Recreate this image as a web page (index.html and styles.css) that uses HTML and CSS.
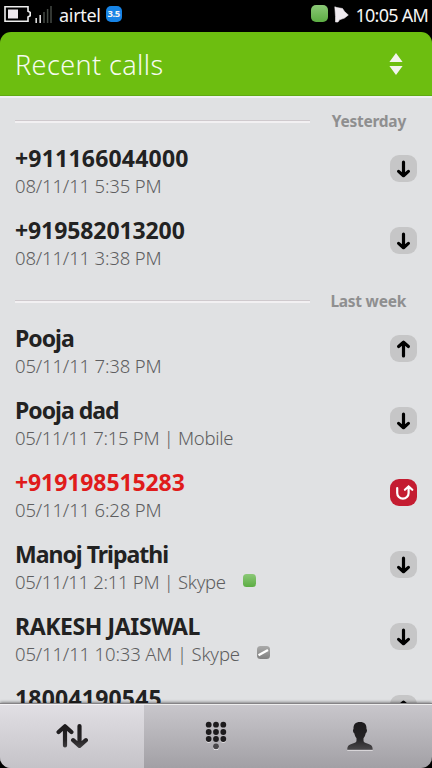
FILE: index.html
```html
<!DOCTYPE html>
<html lang="en">
<head>
<meta charset="utf-8">
<title>Recent calls</title>
<link rel="stylesheet" href="styles.css">
</head>
<body>
<svg class="defs" width="0" height="0" aria-hidden="true">
  <defs>
    <linearGradient id="online" x1="0" y1="0" x2="0" y2="1"><stop offset="0" stop-color="#8bc877"/><stop offset="1" stop-color="#5cad43"/></linearGradient>
    <linearGradient id="offline" x1="0" y1="0" x2="0" y2="1"><stop offset="0" stop-color="#aaa"/><stop offset="1" stop-color="#818181"/></linearGradient>
    <linearGradient id="ink" gradientUnits="userSpaceOnUse" x1="0" y1="0" x2="0" y2="28"><stop offset="0" stop-color="#1c1a1c"/><stop offset=".6" stop-color="#252325"/><stop offset="1" stop-color="#4b494b"/></linearGradient>
    <symbol id="down" viewBox="0 0 27 27"><path d="M13.500 7.200V20M8.600 16.400l4.900 4.300 4.900-4.300" fill="none" stroke="#000" stroke-width="3.200" stroke-linecap="round" stroke-linejoin="round"/></symbol>
    <symbol id="up" viewBox="0 0 27 27"><path d="M13.500 21V8M8.600 11.500l4.900-4.300 4.900 4.300" fill="none" stroke="#000" stroke-width="3.200" stroke-linecap="round" stroke-linejoin="round"/></symbol>
    <symbol id="missed" viewBox="0 0 27 27"><path d="M7.200 9v5a5.700 5.700 0 0 0 11.400 0V8M14.900 10.800l3.700-3.400 3.700 3.400" fill="none" stroke="#fff" stroke-width="2.200" stroke-linecap="round" stroke-linejoin="miter"/></symbol>
  </defs>
</svg>
<div class="phone">
  <header class="status">
    <svg class="battery" width="27" height="18" viewBox="0 0 27 18"><path d="M1 1.800h23v4.400l2.200 1.200v3.400L24 12v4.200H1z" fill="none" stroke="#eee" stroke-width="1.600"/><path d="M4 4.500h10v9H4z" fill="#eee9ee"/></svg>
    <svg class="signal" width="17" height="18" viewBox="0 0 17 18"><path d="M1.200 12v5M5.200 9v8" stroke="#ddd" stroke-width="1.600"/><path d="M9 6v11M12.600 3v14M16 0v17" stroke="#444a44" stroke-width="1.500"/></svg>
    <span class="carrier">airtel</span>
    <span class="net">3.5</span>
    <svg class="presence" width="17" height="17" viewBox="0 0 17 17"><rect width="17" height="17" rx="5" fill="url(#online)"/></svg>
    <svg class="bell" width="15" height="17" viewBox="0 0 15 17"><path d="M.8.8L3 1.600 8.500 2.500 10.500 5.500 14.300 9 10.500 12 5.500 13.800 4 16 1.500 16 1.500 10.500z" fill="#efeaef" stroke="#efeaef" stroke-width=".6" stroke-linejoin="round"/></svg>
    <span class="clock">10:05 AM</span>
  </header>
  <div class="title">
    <h1>Recent calls</h1>
    <svg width="14" height="22" viewBox="0 0 14 22"><path d="M7 0l6.600 9H.4zM7 22l6.600-9H.4z" fill="#f2f4ee"/></svg>
  </div>
  <main class="calls">
    <div class="group"><i></i><h2>Yesterday</h2></div>
    <div class="call"><div><h3 class="long">+911166044000</h3><p>08/11/11 5:35 PM</p></div><svg class="dir"><use href="#down"/></svg></div>
    <div class="call"><div><h3 class="number">+919582013200</h3><p>08/11/11 3:38 PM</p></div><svg class="dir"><use href="#down"/></svg></div>
    <div class="group"><i></i><h2>Last week</h2></div>
    <div class="call"><div><h3>Pooja</h3><p>05/11/11 7:38 PM</p></div><svg class="dir"><use href="#up"/></svg></div>
    <div class="call"><div><h3>Pooja dad</h3><p class="tight">05/11/11 7:15 PM | Mobile</p></div><svg class="dir"><use href="#down"/></svg></div>
    <div class="call missed"><div><h3 class="number">+919198515283</h3><p>05/11/11 6:28 PM</p></div><svg class="dir"><use href="#missed"/></svg></div>
    <div class="call"><div><h3>Manoj Tripathi</h3><p class="tight">05/11/11 2:11 PM | Skype<svg class="dot" viewBox="0 0 13 13"><rect width="13" height="13" rx="3.500" fill="url(#online)"/></svg></p></div><svg class="dir"><use href="#down"/></svg></div>
    <div class="call"><div><h3 class="caps">RAKESH JAISWAL</h3><p>05/11/11 10:33 AM | Skype<svg class="dot" viewBox="0 0 13 13"><rect width="13" height="13" rx="3.500" fill="url(#offline)"/><path d="M1.500 9.300l9.500-5.300" stroke="#fff" stroke-width="2.400"/></svg></p></div><svg class="dir"><use href="#down"/></svg></div>
    <div class="call"><div><h3 class="long">18004190545</h3></div><svg class="dir"><use href="#up"/></svg></div>
  </main>
  <nav class="tabs">
    <a class="active"><svg width="32" height="26" viewBox="0 0 32 26"><path d="M9 22.500V4M2.600 9L9 3.200 15.400 9M23.500 3v19M17.100 17.200l6.400 5.600 6.400-5.600" fill="none" stroke="url(#ink)" stroke-width="4.200" stroke-linecap="round" stroke-linejoin="round"/></svg></a>
    <a><svg width="22" height="30" viewBox="0 0 22 30"><g fill="#f0eef0"><circle cx="3.700" cy="18.800" r="2.900"/><circle cx="18.300" cy="18.800" r="2.900"/><circle cx="11" cy="26.200" r="2.900"/></g><g fill="#1d1b1d"><circle cx="3.700" cy="3.700" r="2.900"/><circle cx="11" cy="3.700" r="2.900"/><circle cx="18.300" cy="3.700" r="2.900"/><circle cx="3.700" cy="11" r="2.900"/><circle cx="11" cy="11" r="2.900"/><circle cx="18.300" cy="11" r="2.900"/><circle cx="3.700" cy="18" r="2.900"/><circle cx="11" cy="18" r="2.900"/><circle cx="18.300" cy="18" r="2.900"/></g><circle cx="11" cy="25.300" r="2.900" fill="#49474a"/></svg></a>
    <a><svg width="26" height="29" viewBox="0 0 26 29"><path d="M.3 28.300h25.400" stroke="#e4e2e4"/><path d="M13 0c4.500 0 6.800 2.400 6.500 7 1 .8.300 4-.8 4.300-.4 2.400-1.300 3.700-2.200 5v2.200c0 1.500 1 2 3 2.800 4 1.300 6.200 2.200 6.200 6.400H.3c0-4.200 2.200-5.100 6.200-6.400 2-.8 3-1.300 3-2.800v-2.200c-.9-1.300-1.800-2.600-2.200-5C6.200 11 5.500 7.800 6.500 7 6.200 2.400 8.500 0 13 0z" fill="url(#ink)"/></svg></a>
  </nav>
</div>
</body>
</html>
```

FILE: styles.css
```css
* { box-sizing: border-box; margin: 0; padding: 0; }
body { background: #000; font-family: "Noto Sans", "Open Sans", sans-serif; }
svg { display: block; flex: none; }
.defs { position: absolute; }
.phone { width: 432px; height: 768px; display: flex; flex-direction: column; overflow: hidden; }
h1, h2, h3, p, span { white-space: nowrap; }

.status { height: 32px; flex: none; display: flex; align-items: center; padding: 0 4px; color: #f4f4f4; }
.battery { margin-top: -4px; }
.signal { margin: -2px 0 0 4px; }
.carrier { margin: -2px 0 0 7px; font-size: 18px; line-height: 30px; letter-spacing: -.3px; }
.net { width: 16px; height: 16px; margin: -5px 0 0 5px; border-radius: 5px; background: #1784e6; font-size: 9.500px; font-weight: 700; line-height: 16px; text-align: center; letter-spacing: -.4px; }
.presence { margin: -5px 0 0 auto; }
.bell { margin: -4px 6px 0 6px; }
.clock { margin-top: -2px; font-size: 18px; line-height: 30px; letter-spacing: -.75px; }

.title { height: 64px; flex: none; display: flex; align-items: center; justify-content: space-between; padding: 1px 29px 0 15px; background: #6dbe10; border-bottom: 1px solid #60aa13; border-radius: 11px 11px 0 0; color: #f6fbef; }
.title h1 { padding-top: 2px; font-size: 27px; font-weight: 300; line-height: 40px; letter-spacing: .4px; }

.calls { flex: 1; min-height: 0; overflow: hidden; padding-top: 1px; background: #e0e1e3; box-shadow: inset 0 2px #eff0f0; }
.group { height: 36px; display: flex; align-items: flex-start; padding: 13px 26px 0 15px; }
.group i { width: 295px; height: 3px; margin-top: 10px; border-top: 1px solid #cfc9cd; border-bottom: 2px solid #f2f0f2; }
.group h2 { margin-left: auto; color: #8f8f90; font-size: 15.500px; font-weight: 700; line-height: 22px; letter-spacing: -.25px; }
.call { height: 72px; display: flex; justify-content: space-between; padding: 9px 15px 0; }
.call h3 { color: #222; font-size: 23px; font-weight: 700; line-height: 32px; letter-spacing: -1px; }
.call h3.long { letter-spacing: .2px; }
.call h3.number { letter-spacing: -.1px; }
.call h3.caps { letter-spacing: -.4px; }
.call p { display: flex; align-items: center; color: #5e5e60; font-size: 18.500px; font-weight: 300; line-height: 23px; letter-spacing: -.16px; }
.call p.tight { letter-spacing: -.3px; }
.dir { width: 27px; height: 27px; margin-top: 13px; border-radius: 9px; background: #c6c6c7; }
.missed h3 { color: #e01b1b; }
.missed .dir { background: #c41c31; }
.dot { width: 13px; height: 13px; margin: -3px 0 0 17px; }

.tabs { position: relative; height: 65px; flex: none; display: grid; grid-template-columns: repeat(3, 1fr); border-top: 1px solid #858386; border-radius: 0 0 11px 11px; background: linear-gradient(#c9c7cc, #a2a0a5); box-shadow: 0 -1px 3px #0006, inset 0 1px #eee; }
.tabs a { display: flex; align-items: center; justify-content: center; }
.tabs .active { padding-bottom: 1px; border-radius: 0 0 0 11px; background: linear-gradient(#e1dfe4, #c5c3c8); box-shadow: inset 0 1px #f5f3f6; }
```
